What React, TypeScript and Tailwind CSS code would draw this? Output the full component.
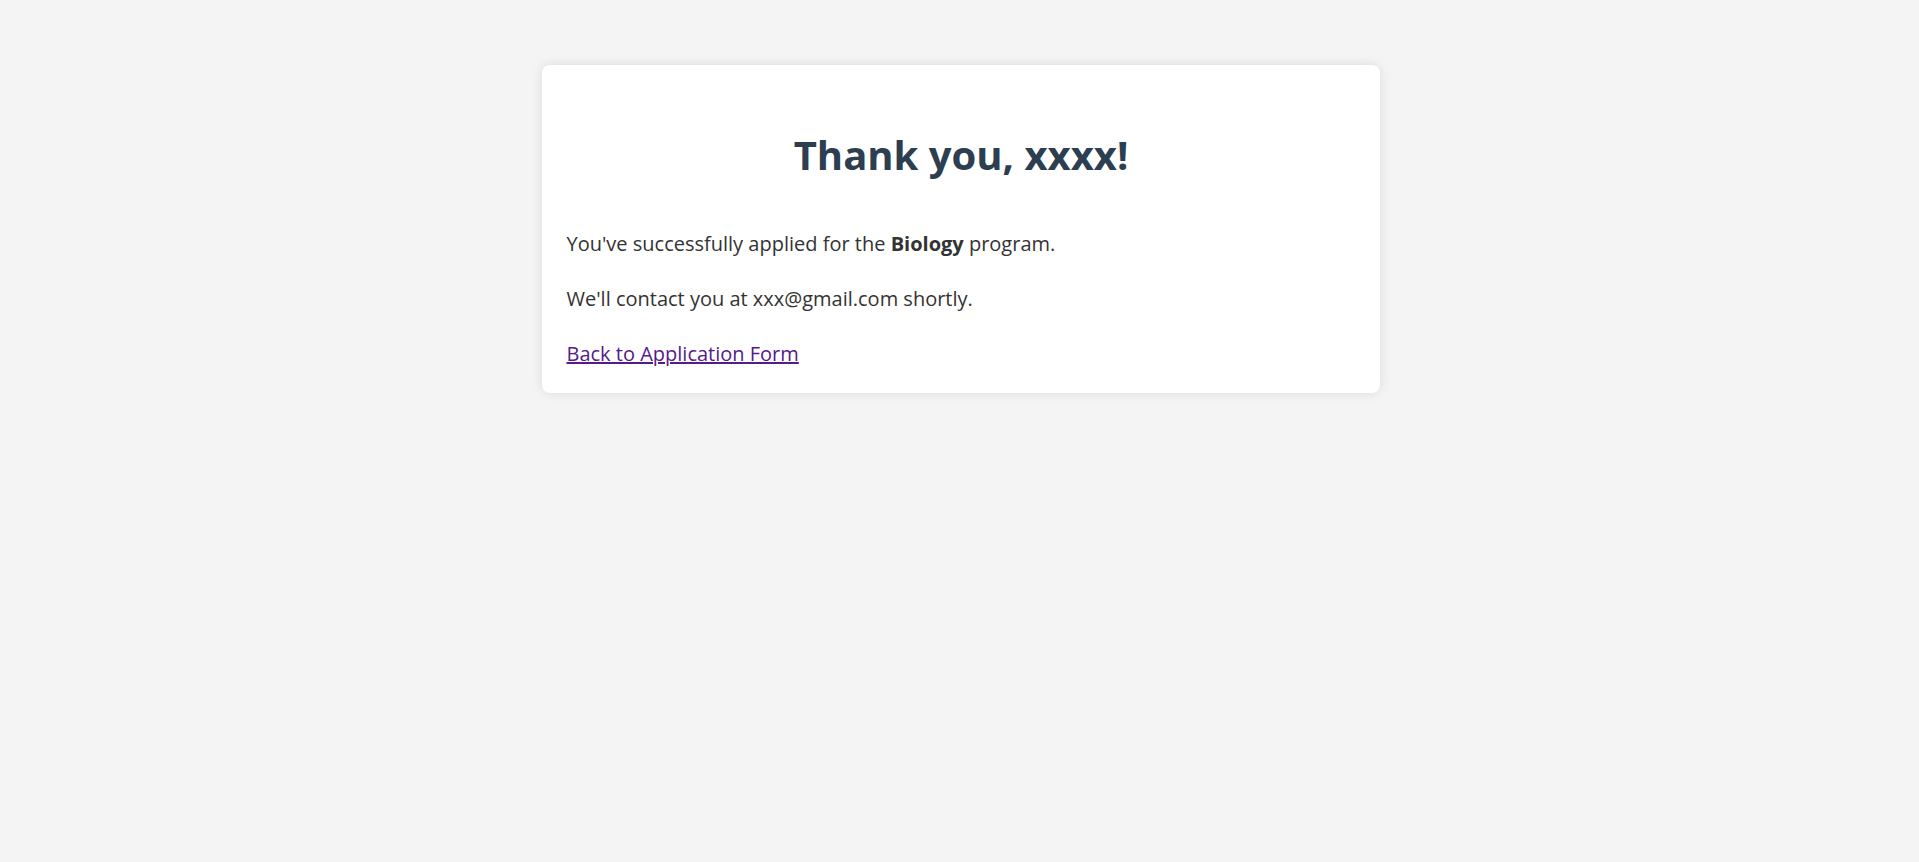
const App = () => (
  <div className="min-h-screen bg-[#f4f4f4] pt-[65px] font-['Open_Sans','Noto_Sans',sans-serif]">
    <div className="mx-auto w-[838px] translate-x-px rounded-lg bg-white pl-[25px] pr-6 pt-[65px] pb-[24px] shadow-[0_0_12px_rgba(0,0,0,0.1)]">
      <h1 className="text-center text-[40px] leading-[50px] font-bold text-[#2c3e50]">Thank you, xxxx!</h1>

      <div className="mt-[49px] flex flex-col gap-[25px] text-[20px] leading-[30px] text-[#333]">
        <p>
          You've successfully applied for the <strong>Biology</strong> program.
        </p>
        <p>We'll contact you at xxx@gmail.com shortly.</p>
        <p>
          <a href="#" className="text-[#551a8b] underline">
            Back to Application Form
          </a>
        </p>
      </div>
    </div>
  </div>
)

export default App
